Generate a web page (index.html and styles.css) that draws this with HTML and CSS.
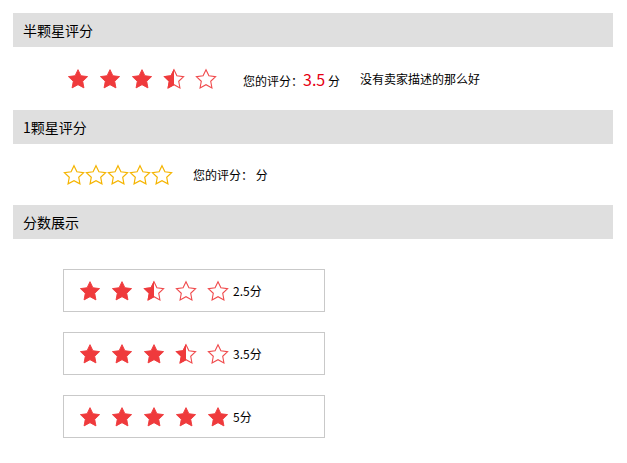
FILE: index.html
```html
<!DOCTYPE html>
<html lang="zh-CN">
<head>
  <meta charset="UTF-8" />
  <title>星级评分</title>
  <link rel="stylesheet" href="styles.css">
</head>
<body>
  <svg width="0" height="0" class="defs">
    <defs>
      <path id="star" d="M12 1.8L15.18 8.43 22.46 9.4 17.14 14.47 18.47 21.7 12 18.2 5.53 21.7 6.86 14.47 1.54 9.4 8.82 8.43Z"/>
      <clipPath id="left-half"><rect x="0" y="0" width="12" height="24"/></clipPath>
    </defs>
  </svg>

  <div class="container">
    <div class="title">半颗星评分</div>
    <div class="rate-row half">
      <div class="stars red">
        <svg viewBox="0 0 24 24"><use href="#star" class="full"/></svg>
        <svg viewBox="0 0 24 24"><use href="#star" class="full"/></svg>
        <svg viewBox="0 0 24 24"><use href="#star" class="full"/></svg>
        <svg viewBox="0 0 24 24"><use href="#star" class="empty"/><use href="#star" class="full" clip-path="url(#left-half)"/></svg>
        <svg viewBox="0 0 24 24"><use href="#star" class="empty"/></svg>
      </div>
      <span class="score-label">您的评分：<em class="score">3.5</em> 分</span>
      <span class="hint">没有卖家描述的那么好</span>
    </div>

    <div class="title">1颗星评分</div>
    <div class="rate-row whole">
      <div class="stars yellow">
        <svg viewBox="0 0 24 24"><use href="#star"/></svg>
        <svg viewBox="0 0 24 24"><use href="#star"/></svg>
        <svg viewBox="0 0 24 24"><use href="#star"/></svg>
        <svg viewBox="0 0 24 24"><use href="#star"/></svg>
        <svg viewBox="0 0 24 24"><use href="#star"/></svg>
      </div>
      <span class="score-label">您的评分： 分</span>
    </div>

    <div class="title">分数展示</div>
    <div class="show-list">
      <div class="show-box">
        <div class="stars red">
          <svg viewBox="0 0 24 24"><use href="#star" class="full"/></svg>
          <svg viewBox="0 0 24 24"><use href="#star" class="full"/></svg>
          <svg viewBox="0 0 24 24"><use href="#star" class="empty"/><use href="#star" class="full" clip-path="url(#left-half)"/></svg>
          <svg viewBox="0 0 24 24"><use href="#star" class="empty"/></svg>
          <svg viewBox="0 0 24 24"><use href="#star" class="empty"/></svg>
        </div>
        <span class="show-text">2.5分</span>
      </div>
      <div class="show-box">
        <div class="stars red">
          <svg viewBox="0 0 24 24"><use href="#star" class="full"/></svg>
          <svg viewBox="0 0 24 24"><use href="#star" class="full"/></svg>
          <svg viewBox="0 0 24 24"><use href="#star" class="full"/></svg>
          <svg viewBox="0 0 24 24"><use href="#star" class="empty"/><use href="#star" class="full" clip-path="url(#left-half)"/></svg>
          <svg viewBox="0 0 24 24"><use href="#star" class="empty"/></svg>
        </div>
        <span class="show-text">3.5分</span>
      </div>
      <div class="show-box">
        <div class="stars red">
          <svg viewBox="0 0 24 24"><use href="#star" class="full"/></svg>
          <svg viewBox="0 0 24 24"><use href="#star" class="full"/></svg>
          <svg viewBox="0 0 24 24"><use href="#star" class="full"/></svg>
          <svg viewBox="0 0 24 24"><use href="#star" class="full"/></svg>
          <svg viewBox="0 0 24 24"><use href="#star" class="full"/></svg>
        </div>
        <span class="show-text">5分</span>
      </div>
    </div>
  </div>
</body>
</html>
```

FILE: styles.css
```css
* {
  box-sizing: border-box;
}

body {
  margin: 0;
  background: #fff;
  color: #000;
  font-family: "Noto Sans CJK SC", "DejaVu Sans", sans-serif;
  font-size: 12px;
}

.defs {
  position: absolute;
}

.container {
  width: 626px;
  padding: 13px;
}

.title {
  height: 34px;
  line-height: 34px;
  padding-left: 10px;
  background: #dfdfdf;
  font-size: 14px;
}

.stars {
  display: flex;
}

.stars svg {
  width: 22px;
  height: 22px;
  display: block;
}

.red {
  gap: 10px;
}

.red .full {
  fill: #ef3a3c;
  stroke: #ef3a3c;
  stroke-width: 1;
  stroke-linejoin: round;
}

.red .empty {
  fill: #fff;
  stroke: #f04a4c;
  stroke-width: 1.2;
}

.yellow use {
  fill: #fff;
  stroke: #f5b400;
  stroke-width: 1.3;
}

.rate-row {
  display: flex;
  align-items: center;
}

.rate-row.half {
  height: 63px;
  padding-left: 54px;
}

.rate-row.whole {
  height: 61px;
  padding-left: 50px;
}

.half .score-label {
  margin-left: 26px;
}

.whole .score-label {
  margin-left: 20px;
}

.score {
  font-style: normal;
  font-size: 16px;
  color: #e60012;
}

.hint {
  margin-left: 20px;
}

.show-list {
  display: flex;
  flex-direction: column;
  gap: 20px;
  padding: 30px 0 0 50px;
}

.show-box {
  width: 262px;
  height: 43px;
  border: 1px solid #c9c9c9;
  display: flex;
  align-items: center;
  padding-left: 15px;
}

.show-text {
  margin-left: 4px;
}
```
